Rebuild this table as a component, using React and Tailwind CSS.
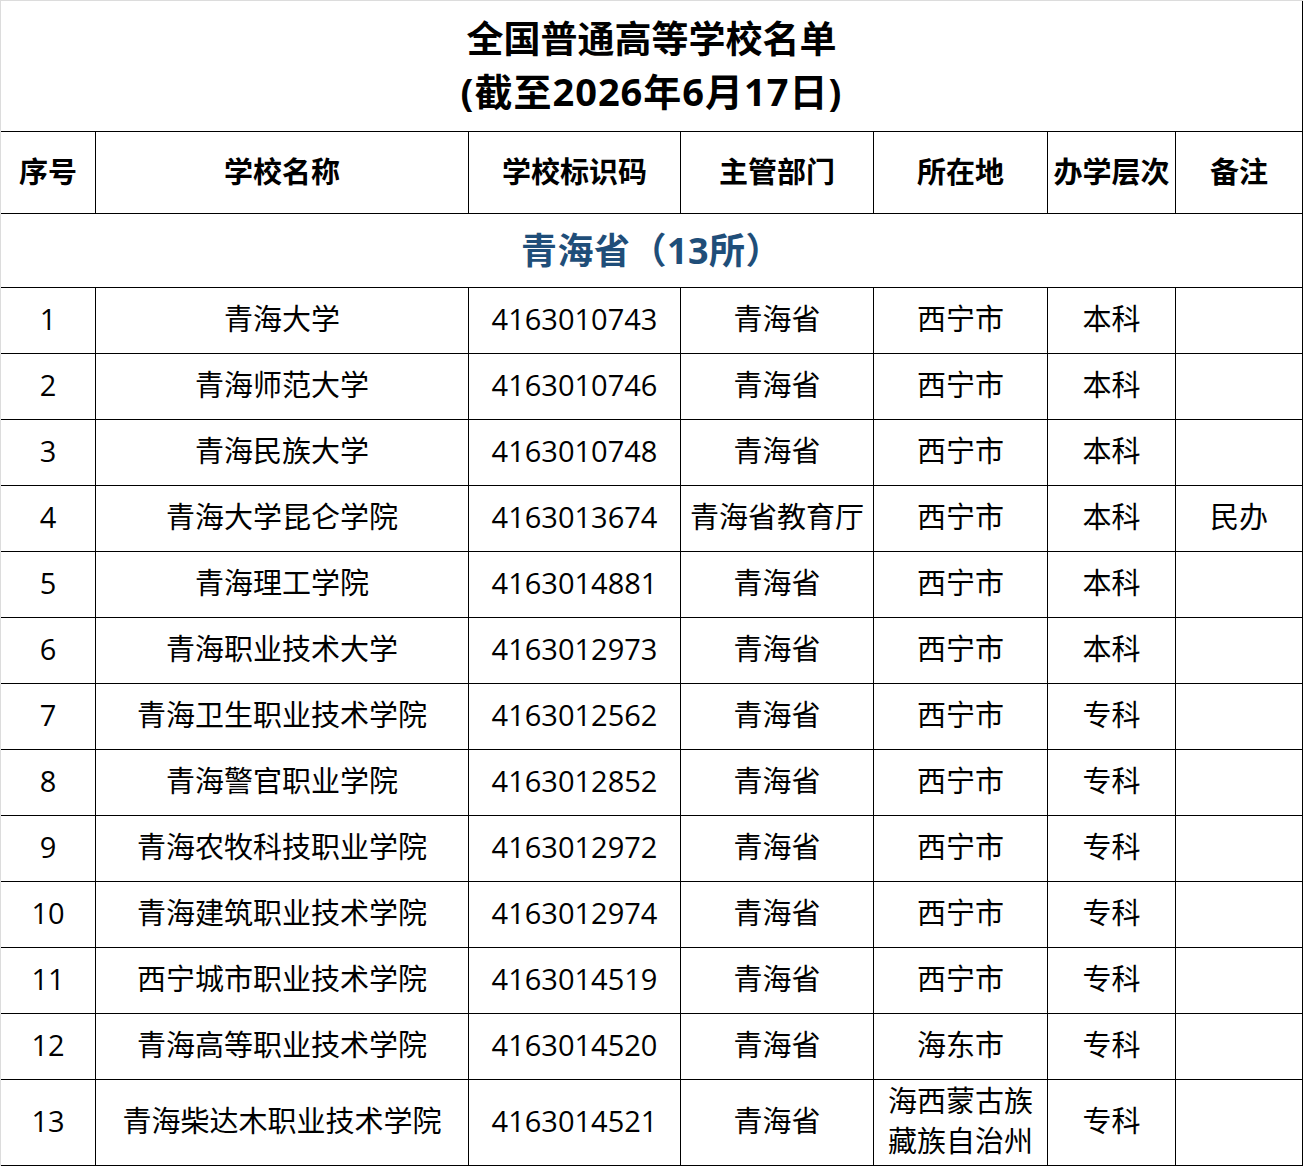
import React from 'react';

const font = { fontFamily: '"Open Sans", "Noto Sans CJK SC", sans-serif' };

const schools = [
  ['1', '青海大学', '4163010743', '青海省', '西宁市', '本科', ''],
  ['2', '青海师范大学', '4163010746', '青海省', '西宁市', '本科', ''],
  ['3', '青海民族大学', '4163010748', '青海省', '西宁市', '本科', ''],
  ['4', '青海大学昆仑学院', '4163013674', '青海省教育厅', '西宁市', '本科', '民办'],
  ['5', '青海理工学院', '4163014881', '青海省', '西宁市', '本科', ''],
  ['6', '青海职业技术大学', '4163012973', '青海省', '西宁市', '本科', ''],
  ['7', '青海卫生职业技术学院', '4163012562', '青海省', '西宁市', '专科', ''],
  ['8', '青海警官职业学院', '4163012852', '青海省', '西宁市', '专科', ''],
  ['9', '青海农牧科技职业学院', '4163012972', '青海省', '西宁市', '专科', ''],
  ['10', '青海建筑职业技术学院', '4163012974', '青海省', '西宁市', '专科', ''],
  ['11', '西宁城市职业技术学院', '4163014519', '青海省', '西宁市', '专科', ''],
  ['12', '青海高等职业技术学院', '4163014520', '青海省', '海东市', '专科', ''],
  ['13', '青海柴达木职业技术学院', '4163014521', '青海省', '海西蒙古族\n藏族自治州', '专科', ''],
];

const headers = ['序号', '学校名称', '学校标识码', '主管部门', '所在地', '办学层次', '备注'];

const cols = 'grid grid-cols-[95px_373px_212px_193px_174px_128px_127px]';

export default function App() {
  return (
    <div className="w-[1304px] h-[1166px] bg-white text-black" style={font}>
      <div className="border-l border-t border-[#dcdcdc] w-[1303px]">
        {/* Title */}
        <div className="h-[131px] border-b border-r border-black flex flex-col items-center justify-center font-bold text-[37px] leading-[53px] pb-[2px]">
          <div>全国普通高等学校名单</div>
          <div className="tracking-[1px] text-[38px]">(截至2026年6月17日)</div>
        </div>

        {/* Header */}
        <div className={cols}>
          {headers.map((h) => (
            <div
              key={h}
              className="h-[82px] border-r border-b border-black flex items-center justify-center font-bold text-[29px] whitespace-nowrap pb-[1px]"
            >
              {h}
            </div>
          ))}
        </div>

        {/* Province */}
        <div className="h-[74px] border-r border-b border-black flex items-center justify-center font-bold text-[36px] text-[#1f4e79] tracking-[0.5px]">
          青海省（13所）
        </div>

        {/* Rows */}
        {schools.map((row, i) => (
          <div key={row[0]} className={cols}>
            {row.map((cell, j) => (
              <div
                key={j}
                className={`${i === schools.length - 1 ? 'h-[86px]' : 'h-[66px]'} border-r border-b border-black flex items-center justify-center text-center text-[29px] leading-[40px] whitespace-pre-line pb-[3px]`}
              >
                {cell}
              </div>
            ))}
          </div>
        ))}
      </div>
    </div>
  );
}
